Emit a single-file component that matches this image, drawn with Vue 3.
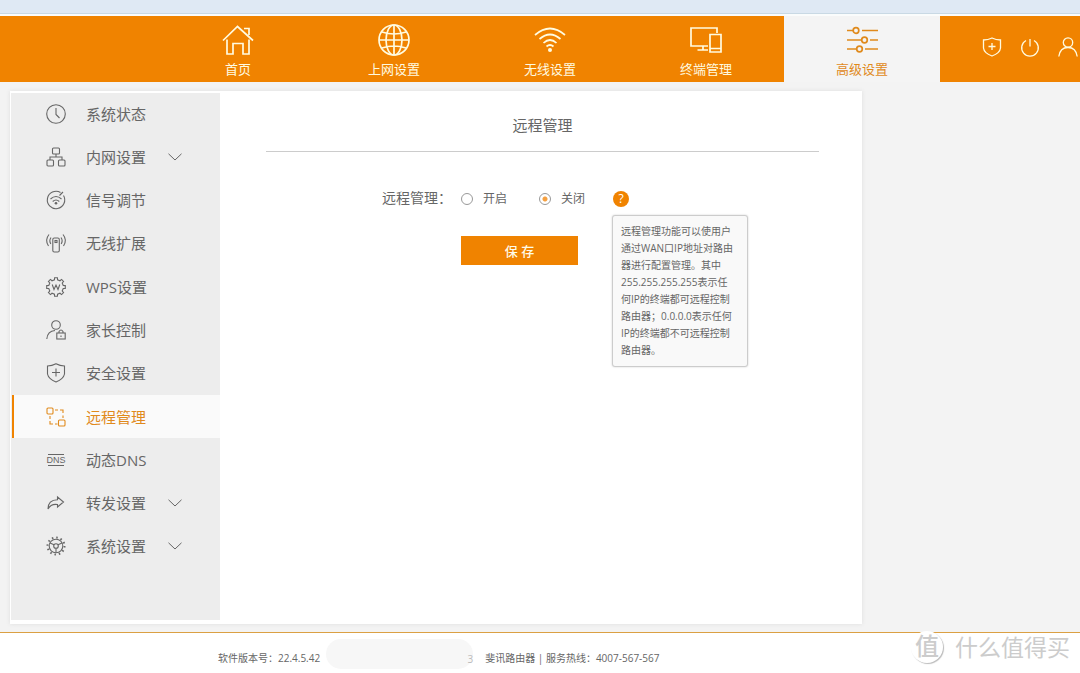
<script setup>
import { ref } from 'vue'

const tabs = [
  { id: 'home', label: '首页' },
  { id: 'globe', label: '上网设置' },
  { id: 'wifi', label: '无线设置' },
  { id: 'devices', label: '终端管理' },
  { id: 'sliders', label: '高级设置', active: true }
]

const menu = [
  { id: 'clock', label: '系统状态' },
  { id: 'lan', label: '内网设置', sub: true },
  { id: 'signal', label: '信号调节' },
  { id: 'extend', label: '无线扩展' },
  { id: 'wps', label: 'WPS设置' },
  { id: 'parent', label: '家长控制' },
  { id: 'shield', label: '安全设置' },
  { id: 'remote', label: '远程管理', active: true },
  { id: 'dns', label: '动态DNS' },
  { id: 'forward', label: '转发设置', sub: true },
  { id: 'gear', label: '系统设置', sub: true }
]

const remote = ref('off')

const gearPath = (cx, cy, teeth, outer, inner) => {
  const step = (Math.PI * 2) / teeth
  const at = (r, a) => `${(cx + r * Math.sin(a)).toFixed(2)} ${(cy - r * Math.cos(a)).toFixed(2)}`
  let d = ''
  for (let i = 0; i < teeth; i++) {
    const a = i * step
    d += `${i ? 'L' : 'M'}${at(inner, a - step * 0.27)}L${at(outer, a - step * 0.19)}L${at(outer, a + step * 0.19)}L${at(inner, a + step * 0.27)}`
  }
  return d + 'Z'
}
const wpsGear = gearPath(10, 10, 8, 9.4, 7.4)
</script>

<template>
  <div class="page">
    <div class="strip"></div>
    <header class="header">
      <nav class="tabs">
        <a v-for="t in tabs" :key="t.id" href="#" class="tab" :class="{ active: t.active }">
          <svg class="tab-icon" viewBox="0 0 32 32" aria-hidden="true">
            <g v-if="t.id === 'home'">
              <path d="M1 16.5L15.500 2.500L31 16.500M5 15.500V30H11V19.500H21V30H27V15.500M22 4.500H27V11" />
            </g>
            <g v-else-if="t.id === 'globe'">
              <circle cx="16" cy="16" r="15" />
              <ellipse cx="16" cy="16" rx="8" ry="15" />
              <path d="M16 1V31M1 16H31M4 8Q16 12 28 8M4 24Q16 20 28 24" />
            </g>
            <g v-else-if="t.id === 'wifi'">
              <path d="M1 11Q16-2 31 11M5.500 15Q16 6 26.500 15M9.500 19Q16 13 22.500 19M12.500 22.500Q16 19.500 19.500 22.500" />
              <circle class="solid" cx="16" cy="26" r="2" />
            </g>
            <g v-else-if="t.id === 'devices'">
              <path d="M18 22H1V4H27V9M13 22V26M7.500 26H18M20 10.500H31V28H20ZM20 24.500H31" />
            </g>
            <g v-else>
              <circle cx="10" cy="6.500" r="2.800" />
              <circle cx="18.500" cy="16" r="2.800" />
              <circle cx="13.500" cy="25" r="2.800" />
              <path d="M1 6.500H7M16 6.500H32M1 16H15.500M24 16H32M1 25H10.500M19 25H32" />
            </g>
          </svg>
          <span>{{ t.label }}</span>
        </a>
      </nav>
      <div class="tools">
        <button type="button" aria-label="安全">
          <svg viewBox="0 0 20 20"><path d="M10 1Q14 3 18.500 3V11Q18 16 10 19Q2 16 1.500 11V3Q6 3 10 1ZM10 6V13M6.500 9.500H13.500" /></svg>
        </button>
        <button type="button" aria-label="退出">
          <svg viewBox="0 0 20 20"><path d="M10 2V9.500M6 3.500A8.300 8.300 0 1 0 14 3.500" /></svg>
        </button>
        <button type="button" aria-label="用户">
          <svg viewBox="0 0 20 20"><circle cx="10" cy="5.500" r="4.700" /><path d="M.8 19.500Q2 10.500 10 10.500Q18 10.500 19.200 19.500" /></svg>
        </button>
      </div>
    </header>

    <main class="main">
      <div class="panel">
        <aside class="sidebar">
          <nav class="menu">
            <a v-for="m in menu" :key="m.id" href="#" class="item" :class="{ active: m.active }">
              <svg class="item-icon" viewBox="0 0 20 20" aria-hidden="true">
                <g v-if="m.id === 'clock'"><circle cx="10" cy="10" r="9.300" /><path d="M10 4V10.500L13.500 14" /></g>
                <g v-else-if="m.id === 'lan'">
                  <rect x="6.500" y="1" width="7" height="6" rx="1" />
                  <rect x="1" y="13" width="6.500" height="6" rx="1" />
                  <rect x="12.500" y="13" width="6.500" height="6" rx="1" />
                  <path d="M10 7V10M4 13V10H16V13" />
                </g>
                <g v-else-if="m.id === 'signal'">
                  <path d="M14.500 2.500A8.700 8.700 0 1 0 17.500 5.500M13.500 5.500L17 2M4.500 9Q10 4 15.500 9M6.700 11.500Q10 8.500 13.300 11.500" />
                  <circle class="solid" cx="10" cy="13.300" r="1.300" />
                </g>
                <g v-else-if="m.id === 'extend'">
                  <rect x="6.800" y="5" width="6.500" height="14" rx="1.500" />
                  <rect x="9" y="7.500" width="2" height="2" />
                  <path d="M4.800 11Q2.800 7.500 5 4.500M2.500 13Q-1.500 7 3 1.500M15.200 11Q17.200 7.500 15 4.500M17.500 13Q21.500 7 17 1.500" />
                </g>
                <g v-else-if="m.id === 'wps'"><path :d="wpsGear" /><path d="M6.200 7.500L8 12.500L10 8L12 12.500L13.800 7.500" /></g>
                <g v-else-if="m.id === 'parent'">
                  <circle cx="10" cy="5" r="4.300" />
                  <path d="M.8 19Q1.500 11 9 10.500M13 13V11.500Q15 8.500 17 11.500V13M15 15.500V17" />
                  <rect x="10.800" y="13" width="8.400" height="6" />
                </g>
                <g v-else-if="m.id === 'shield'"><path d="M10 .8Q14 3 18.500 3V11Q17.500 16 10 19Q2.500 16 1.500 11V3Q6 3 10 .8ZM10 5.500V13.500M6 9.500H14" /></g>
                <g v-else-if="m.id === 'remote'">
                  <rect x="1" y="1" width="6" height="6" rx="1" />
                  <rect x="12.500" y="13" width="6.500" height="6" rx="1" />
                  <path d="M9 3H12M14 3H17V6M17 8.500V11M4 9V12M4 14V17H7M9 17H11.500" />
                </g>
                <g v-else-if="m.id === 'dns'">
                  <path d="M2 4.500H18M2 15.500H18" />
                  <text class="dns" x="10" y="13" text-anchor="middle">DNS</text>
                </g>
                <g v-else-if="m.id === 'forward'"><path d="M11.500 4L17.500 9L11.500 14V11.500Q5 10.500 2 16Q2 7 11.500 6.800Z" /></g>
                <g v-else>
                  <circle cx="10" cy="10" r="6.800" />
                  <circle class="teeth" cx="10" cy="10" r="8.500" />
                  <circle cx="10" cy="10" r="2.300" />
                  <path d="M12 8.800L16 7M8 8.800L4 7M10 12.300V16.800" />
                </g>
              </svg>
              <span class="item-label">{{ m.label }}</span>
              <svg v-if="m.sub" class="chevron" viewBox="0 0 14 8" aria-hidden="true"><path d="M.5 .8L7 7L13.500 .8" /></svg>
            </a>
          </nav>
        </aside>

        <section class="content">
          <h1>远程管理</h1>
          <form class="form" @submit.prevent>
            <div class="row" role="radiogroup" aria-labelledby="remote-label">
              <span id="remote-label" class="row-label">远程管理：</span>
              <label class="option" for="remote-on">
                <input id="remote-on" v-model="remote" type="radio" name="remote" value="on" />开启
              </label>
              <label class="option" for="remote-off">
                <input id="remote-off" v-model="remote" type="radio" name="remote" value="off" />关闭
              </label>
              <div class="help">
                <button type="button" class="help-button" aria-describedby="remote-tip">?</button>
                <div id="remote-tip" class="tip" role="tooltip">
                  远程管理功能可以使用户<br />通过WAN口IP地址对路由<br />器进行配置管理。其中<br />255.255.255.255表示任<br />何IP的终端都可远程控制<br />路由器；0.0.0.0表示任何<br />IP的终端都不可远程控制<br />路由器。
                </div>
              </div>
            </div>
            <button type="submit" class="save">保 存</button>
          </form>
        </section>
      </div>
    </main>

    <footer class="footer">
      <span>软件版本号：22.4.5.42</span>
      <span class="blurred">3</span>
      <span>斐讯路由器 | 服务热线：4007-567-567</span>
      <div class="watermark">
        <span class="seal">值</span>
        <span>什么值得买</span>
      </div>
    </footer>
  </div>
</template>

<style>
body {
  background: #fff;
  overflow: hidden;
}
</style>

<style scoped>
.page {
  display: flex;
  flex-direction: column;
  min-height: 100vh;
  color: #666;
  font-family: "Open Sans", "Noto Sans CJK SC", sans-serif;
}
.page *,
.page {
  box-sizing: border-box;
}
a {
  color: inherit;
  text-decoration: none;
}
button {
  padding: 0;
  border: 0;
  font-family: inherit;
  color: inherit;
  background: none;
  cursor: pointer;
}
svg {
  display: block;
  flex: none;
  fill: none;
  stroke: currentColor;
  overflow: visible;
}
.solid {
  fill: currentColor;
  stroke: none;
}
.strip {
  height: 16px;
  background: #dfe9f4;
  border-bottom: 2px solid #fafcfc;
  box-shadow: inset 0 -1px #c9d9e4;
}
.header {
  display: flex;
  height: 66px;
  padding-left: 160px;
  color: #fffbe0;
  background: #f08300;
}
.tabs {
  display: flex;
}
.tab {
  display: flex;
  flex-direction: column;
  align-items: center;
  width: 156px;
  padding-top: 8px;
  font-size: 13px;
  line-height: 20px;
}
.tab-icon {
  width: 32px;
  height: 32px;
  margin-bottom: 3px;
  stroke-width: 1.7;
}
.tab.active {
  color: #e08a1c;
  background: #f4f4f4;
}
.tools {
  display: flex;
  align-items: center;
  gap: 18px;
  padding: 0 2px 4px 42px;
}
.tools svg {
  width: 20px;
  height: 20px;
  stroke-width: 1.3;
}
.main {
  flex: 1;
  padding: 9px 218px 8px 10px;
  background: #f3f3f3;
}
.panel {
  display: flex;
  height: 100%;
  min-height: 533px;
  background: #fff;
  box-shadow: 0 0 4px #ddd;
}
.sidebar {
  width: 209px;
  margin: 2px 0 4px 1px;
  background: #ededed;
}
.menu {
  display: grid;
  grid-template-rows: repeat(11, 1fr);
  height: 476px;
  margin-top: -1px;
}
.item {
  display: flex;
  align-items: center;
  padding-left: 35px;
  font-size: 15px;
  line-height: 20px;
}
.item.active {
  padding-left: 32px;
  margin-left: 1px;
  border-left: 2px solid #f08300;
  color: #e08a1c;
  background: #fafafa;
}
.item-icon {
  width: 20px;
  height: 20px;
  margin-right: 20px;
  stroke-width: 1.1;
}
.item-label {
  width: 82px;
}
.dns {
  fill: currentColor;
  stroke: none;
  font-family: "Liberation Sans", sans-serif;
  font-size: 9px;
}
.teeth {
  stroke-width: 2;
  stroke-dasharray: 1.5 2.95;
}
.chevron {
  width: 14px;
  height: 8px;
}
.content {
  flex: 1;
  padding: 0 43px 0 46px;
}
h1 {
  margin: 0;
  padding: 24px 0 16px;
  border-bottom: 1px solid #ccc;
  font-size: 15px;
  font-weight: 400;
  line-height: 20px;
  text-align: center;
}
.form {
  padding: 37px 0 0 116px;
}
.row {
  display: flex;
  align-items: center;
  height: 20px;
}
.row-label {
  width: 79px;
  font-size: 14px;
  line-height: 18px;
  padding-bottom: 2px;
  white-space: nowrap;
}
.option {
  display: flex;
  align-items: center;
  gap: 10px;
  margin-right: 32px;
  font-size: 12px;
  line-height: 20px;
  white-space: nowrap;
}
.option input {
  appearance: none;
  width: 12px;
  height: 12px;
  margin: 0;
  border: 1px solid #999;
  border-radius: 50%;
  background: #fff;
}
.option input:checked {
  background: radial-gradient(circle, #f5a040 0 2px, #fff 3px);
}
.help {
  position: relative;
  margin-left: -4px;
}
.help-button {
  display: block;
  width: 16px;
  height: 16px;
  border-radius: 50%;
  color: #fff;
  background: #f08300;
  font-size: 12px;
  line-height: 16px;
}
.tip {
  position: absolute;
  top: 24px;
  left: -1px;
  padding: 7px 8px;
  border: 1px solid #ccc;
  border-radius: 3px;
  width: 136px;
  color: #666;
  background: #f9f9f9;
  box-shadow: 0 0 2px #ccc;
  font-size: 10px;
  line-height: 17px;
  white-space: nowrap;
}
.save {
  display: block;
  width: 117px;
  height: 29px;
  margin: 27px 0 0 79px;
  color: #fffbe8;
  background: #f08300;
  font-size: 13px;
  font-weight: 500;
}
.footer {
  position: relative;
  display: flex;
  align-items: center;
  height: 41px;
  padding: 10px 0 0 218px;
  border-top: 1px solid #dba043;
  background: #fff;
  font-size: 10px;
  line-height: 16px;
}
.blurred {
  width: 147px;
  height: 30px;
  margin: -8px 12px 0 6px;
  padding-top: 12px;
  border-radius: 15px;
  color: #bbb;
  background: #f7f7f7;
  text-align: right;
}
.watermark {
  position: absolute;
  right: 10px;
  bottom: 10px;
  display: flex;
  align-items: center;
  gap: 12px;
  color: #ccc;
  font-size: 23px;
  line-height: 32px;
}
.seal {
  width: 32px;
  height: 32px;
  border-radius: 50%;
  background: #fff;
  box-shadow: 1px 1px 1px #bbb;
  font-size: 24px;
  font-weight: 500;
  line-height: 30px;
  text-align: center;
}
</style>
